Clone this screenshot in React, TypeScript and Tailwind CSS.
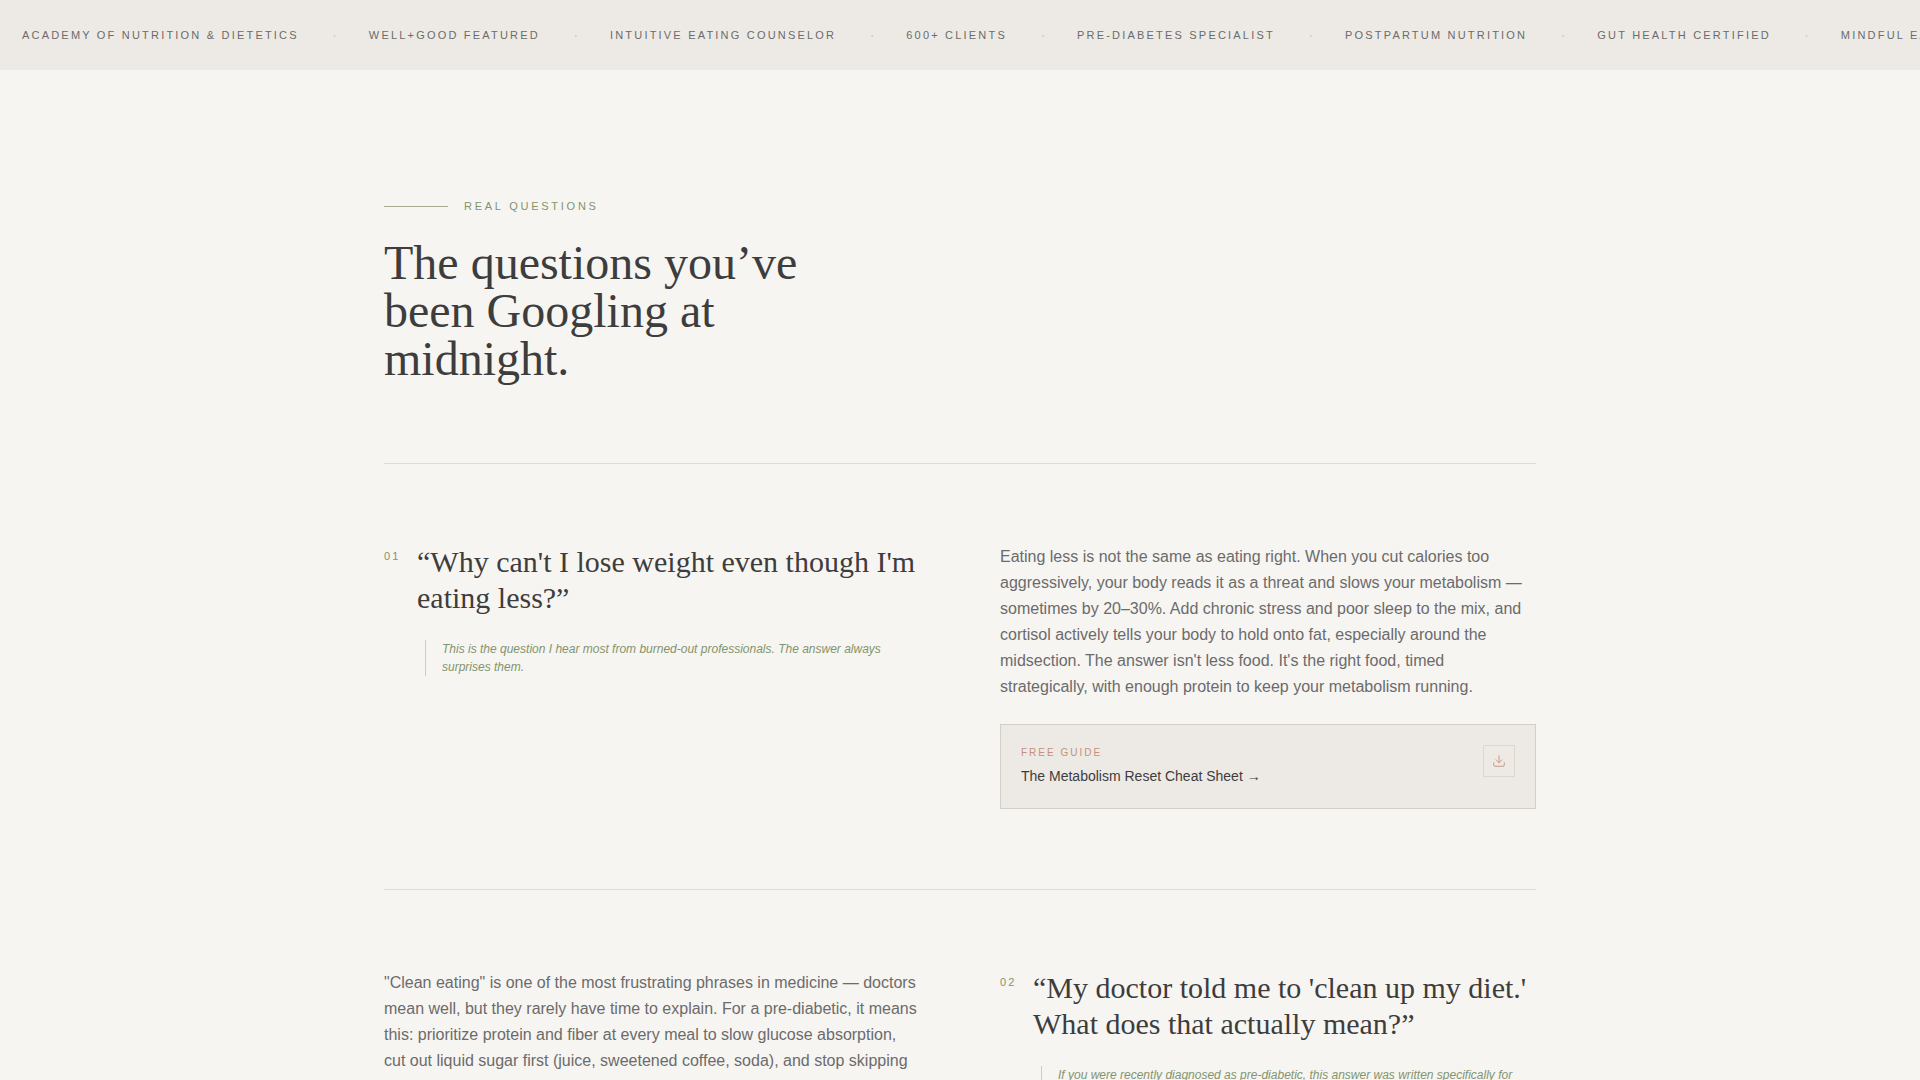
import { Download } from "lucide-react";

const tickerItems = [
  "Academy of Nutrition & Dietetics",
  "Well+Good Featured",
  "Intuitive Eating Counselor",
  "600+ Clients",
  "Pre-Diabetes Specialist",
  "Postpartum Nutrition",
  "Gut Health Certified",
  "Mindful Eating",
];

function Question({ num, title, note }: { num: string; title: string; note: string }) {
  return (
    <div className="w-[536px] shrink-0">
      <div className="flex items-start gap-4">
        <span className="mt-[4px] w-[17px] shrink-0 text-[11px] leading-[16px] tracking-[0.2em] text-[#82946c]">{num}</span>
        <h3 className="font-['Liberation_Serif',serif] text-[30px] leading-[36px] font-normal text-[#3d3d3d]">{title}</h3>
      </div>
      <p className="mt-[24px] ml-[41px] border-l border-[#cfccc2] pl-4 text-[12px] leading-[18px] text-[#82946c] italic">{note}</p>
    </div>
  );
}

function Answer({ text, children }: { text: string; children?: React.ReactNode }) {
  return (
    <div className="w-[536px] shrink-0">
      <p className="text-[16px] leading-[26px] text-[#6b6b6b]">{text}</p>
      {children}
    </div>
  );
}

export default function App() {
  return (
    <div className="h-screen overflow-hidden bg-[#f7f5f2] font-['Liberation_Sans',sans-serif]">
      {/* Credentials ticker */}
      <div className="flex h-[70px] items-center overflow-hidden bg-[#edeae5] pl-[22px] text-[11px] tracking-[0.2em] whitespace-nowrap text-[#6b6b6b] uppercase">
        {tickerItems.map((item, i) => (
          <div key={item} className="flex shrink-0 items-center">
            <span>{item}</span>
            {i < tickerItems.length - 1 && (
              <span className="mr-[31.85px] ml-[33.5px] text-[14px] tracking-normal text-[#c9c5bc]">·</span>
            )}
          </div>
        ))}
      </div>

      <div className="mx-auto w-[1152px] pt-[130px]">
        <div className="flex items-center gap-4">
          <div className="h-px w-16 bg-[#a8ab92]" />
          <span className="text-[11px] leading-[12px] tracking-[0.25em] text-[#82946c] uppercase">Real Questions</span>
        </div>
        <h2 className="mt-[27px] w-[480px] font-['Liberation_Serif',serif] text-[48px] leading-[48px] font-normal text-[#3d3d3d]">
          The questions you’ve been Googling at midnight.
        </h2>

        <div className="mt-[80px] flex justify-between border-t border-[#dedbd4] pt-[80px] pb-[80px]">
          <Question
            num="01"
            title="“Why can't I lose weight even though I'm eating less?”"
            note="This is the question I hear most from burned-out professionals. The answer always surprises them."
          />
          <Answer text="Eating less is not the same as eating right. When you cut calories too aggressively, your body reads it as a threat and slows your metabolism — sometimes by 20–30%. Add chronic stress and poor sleep to the mix, and cortisol actively tells your body to hold onto fat, especially around the midsection. The answer isn't less food. It's the right food, timed strategically, with enough protein to keep your metabolism running.">
            <div className="mt-[24px] flex h-[85px] items-start justify-between border border-[#d3d0c9] bg-[#edeae5] pt-[20px] pr-[20px] pl-[20px]">
              <div>
                <div className="pt-px text-[10px] leading-[14px] tracking-[0.2em] text-[#c4917a] uppercase">Free Guide</div>
                <div className="mt-[7px] text-[14px] leading-[18px] text-[#3d3d3d]">The Metabolism Reset Cheat Sheet →</div>
              </div>
              <div className="flex h-8 w-8 items-center justify-center border border-[#dcd8d0]">
                <Download size={14} strokeWidth={1.5} className="text-[#c4917a]" />
              </div>
            </div>
          </Answer>
        </div>

        <div className="flex justify-between border-t border-[#dedbd4] pt-[80px]">
          <Answer text={'"Clean eating" is one of the most frustrating phrases in medicine — doctors mean well, but they rarely have time to explain. For a pre-diabetic, it means this: prioritize protein and fiber at every meal to slow glucose absorption, cut out liquid sugar first (juice, sweetened coffee, soda), and stop skipping meals.'} />
          <Question
            num="02"
            title="“My doctor told me to 'clean up my diet.' What does that actually mean?”"
            note="If you were recently diagnosed as pre-diabetic, this answer was written specifically for you."
          />
        </div>
      </div>
    </div>
  );
}
